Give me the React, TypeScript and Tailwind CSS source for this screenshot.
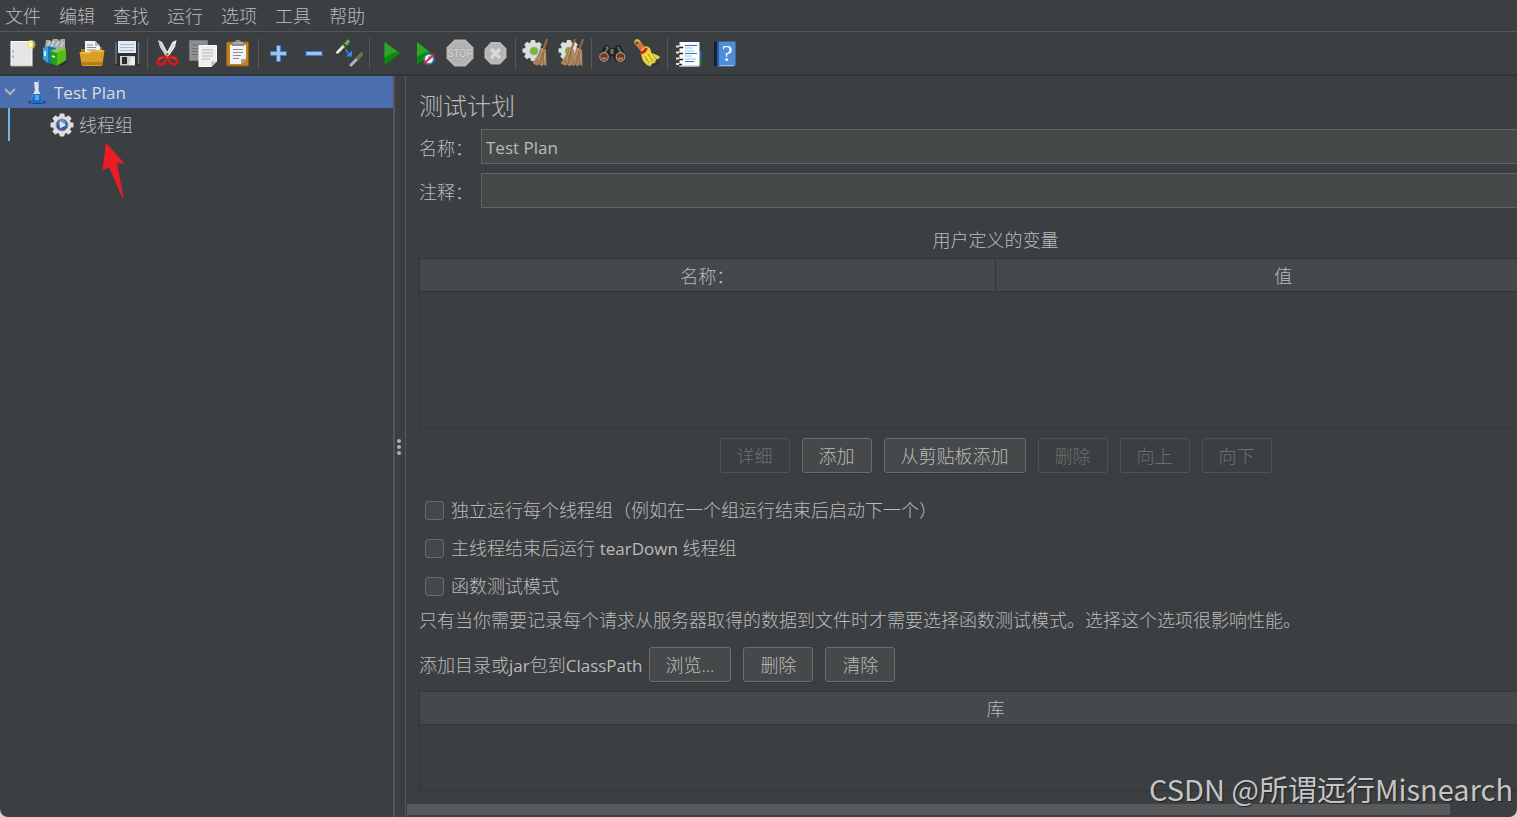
import { useState } from 'react';
import type { ReactNode } from 'react';

const menus = ['文件', '编辑', '查找', '运行', '选项', '工具', '帮助'];

function Icon({ children }: { children: ReactNode }) {
    return (
        <svg width="28" height="28" viewBox="0 0 28 28" fill="none" aria-hidden="true">
            {children}
        </svg>
    );
}

const gearTeeth = [0, 45, 90, 135, 180, 225, 270, 315];

function Gear({ cx, cy, r, fill }: { cx: number; cy: number; r: number; fill: string }) {
    return (
        <g fill={fill}>
            <circle cx={cx} cy={cy} r={r * 0.8} />
            {gearTeeth.map((a) => (
                <rect key={a} x={cx - r * 0.22} y={cy - r} width={r * 0.44} height={r * 0.5} rx="1" transform={`rotate(${a} ${cx} ${cy})`} />
            ))}
        </g>
    );
}

function BroomHead({ x }: { x: number }) {
    return (
        <g transform={`translate(${x} 0)`}>
            <path d="M15 0l2 .6-3.600 10-2-.6z" fill="#9a6a43" />
            <path d="M9 9l6 1.500.5 16.500-3-1.500-2 2-2-2-3 1-4-2.500c3-4 6-8 7.500-14z" fill="#a98560" />
            <path d="M10 12l-4 12M12 12l-3 13M13 13l-1 12" stroke="#86643f" strokeWidth="0.8" />
            <path d="M11 11l-4 10M13.500 14v8" stroke="#cdb08a" strokeWidth="0.7" />
        </g>
    );
}

const icons: Record<string, ReactNode> = {
    新建: (
        <Icon>
            <rect x="3" y="2.500" width="21" height="24" fill="#e6e6e6" stroke="#fff" />
            <path d="M3 27h21.500" stroke="#a5a5a5" />
            <path d="M5 11.500v2M5 16.500v2" stroke="#999" strokeWidth="1.500" />
            <circle cx="23" cy="5.500" r="4.500" fill="#f5e663" opacity="0.65" />
            <circle cx="23" cy="5.500" r="2" fill="#fffbd0" />
        </Icon>
    ),
    模板: (
        <Icon>
            <path d="M2 8l1-7h4l1 2 2-3h5l1 2 2-2h4v11l-9 3z" fill="#a5abae" />
            <path d="M4 8l3-6M8 9l3-7M13 7l3-5M18 8l2-5" stroke="#d5dadc" strokeWidth="1.300" />
            <path d="M0 9l5-2 8 2v17l-8-2-5-4z" fill="#1275b4" />
            <path d="M0 9l5-2v17l-5-4z" fill="#39a0dc" />
            <path d="M7 12l7 2v13l-6-3z" fill="#239f1c" />
            <path d="M14 14l9-4v11l-9 6z" fill="#55bd13" />
            <path d="M7 12l8-3 8 1-9 4z" fill="#7fce4a" />
            <path d="M9 17l3 1M2 12v5" stroke="#fff" strokeWidth="1.500" />
            <path d="M14 27l9-5 2 1-6 4z" fill="#202224" opacity="0.5" />
        </Icon>
    ),
    打开: (
        <Icon>
            <path d="M3 10h5l1-2h15v14H3z" fill="#b27a13" />
            <path d="M7 2h10l5 5v10H7z" fill="#f2f2f2" />
            <path d="M17 2v5h5z" fill="#bdbdbd" />
            <path d="M9 6h6M9 8.500h9M9 11h9" stroke="#8d8d8d" strokeWidth="1" />
            <path d="M1.500 13h10l2-2h13l-2 14.500a2 2 0 0 1-2 1.500h-17a2 2 0 0 1-2-1.500z" fill="#d99e24" />
            <path d="M2.500 14h9.500l2-2h11" stroke="#f6cc69" />
            <path d="M3.500 23h21l-.5 3h-20z" fill="#b77d11" />
        </Icon>
    ),
    保存: (
        <Icon>
            <rect x="2" y="2" width="24.500" height="25" rx="1.500" fill="#2c2f33" />
            <path d="M3 3v22M25.500 3v22" stroke="#70757b" strokeWidth="1.500" />
            <rect x="5" y="2" width="18" height="12" fill="#dfeaf4" />
            <path d="M7 5.500h14M7 8.500h14M7 11.500h14" stroke="#a5bdcf" />
            <rect x="7" y="17" width="15" height="9.500" fill="#c9cbcc" />
            <rect x="9" y="18" width="5" height="7" fill="#2a2c2e" />
            <path d="M18 18h4v8h-6z" fill="#eee" />
        </Icon>
    ),
    剪切: (
        <Icon>
            <path d="M4 1l4 2 8 15-3 1L6 8z" fill="#e4e4e2" />
            <path d="M22.500 1l-4 2-8 15 3 1L21 8z" fill="#f4f4f2" />
            <path d="M5 3l8 14M20 5l-7 13" stroke="#a5a5a3" strokeWidth="0.8" />
            <circle cx="13.300" cy="15" r="1" fill="#555" />
            <path d="M12 18c0 4-1.500 7.500-5 7.500-2.500 0-3.500-1.500-3-3.500.5-2.500 3-4.500 8-4z" stroke="#d11a1d" strokeWidth="2.800" />
            <path d="M15 18c0 4 1.500 7.500 5 7.500 2.500 0 3.500-1.500 3-3.500-.5-2.500-3-4.500-8-4z" stroke="#d11a1d" strokeWidth="2.800" />
            <path d="M5 21c.8-1.500 2-2 3.500-2.400M18 18.500c1.500 0 3 1 3.700 2" stroke="#f37373" strokeWidth="0.8" />
        </Icon>
    ),
    复制: (
        <Icon>
            <rect x="0.500" y="1.500" width="18" height="20" fill="#8d9092" stroke="#777a7c" />
            <path d="M3 6h12M3 9.500h8M3 12.500h7M3 15.500h7" stroke="#6d7072" />
            <path d="M10 6.500h17.500v16l-5 5H10z" fill="#efefef" stroke="#fff" />
            <path d="M22.500 27.500v-5h5z" fill="#b7b7b7" />
            <path d="M13 11h11M13 14h11M13 17h11M13 20h8" stroke="#b5b5b5" />
        </Icon>
    ),
    粘贴: (
        <Icon>
            <rect x="2.500" y="3" width="22" height="24" rx="1" fill="#c18023" stroke="#8b5812" />
            <path d="M6 6h16v14l-5 5H6z" fill="#f3f3f3" />
            <path d="M17 25v-5h5z" fill="#a5a5a5" />
            <path d="M9 10.500h10M9 13.500h10M9 16.500h8M9 19.500h6" stroke="#8d8d8d" />
            <path d="M8 3h3l1-2h4l1 2h3v4H8z" fill="#8b8d8c" />
            <path d="M9 4h10" stroke="#c9cbca" />
        </Icon>
    ),
    展开: (
        <Icon>
            <path d="M11.500 6.500h4v6h6v4h-6v6h-4v-6h-6v-4h6z" fill="#9ec4ee" stroke="#3f7bc8" />
        </Icon>
    ),
    折叠: (
        <Icon>
            <rect x="6" y="12.500" width="16" height="4" fill="#9ec4ee" stroke="#3f7bc8" />
        </Icon>
    ),
    切换: (
        <Icon>
            <path d="M2.500 13.500l7-7.500" stroke="#e3e3df" strokeWidth="3" strokeLinecap="round" />
            <path d="M10 6.500l3-4" stroke="#6aa84a" strokeWidth="3.600" strokeLinecap="round" />
            <path d="M8.500 5l3.500 3" stroke="#2c3a25" strokeWidth="1.300" />
            <path d="M2 15.500l9-5" stroke="#222527" opacity="0.5" />
            <path d="M10.500 10.500l4 5" stroke="#3b86ed" strokeWidth="1.600" />
            <path d="M17 11.500v6h-6z" fill="#3b86ed" />
            <path d="M16 26l7-7" stroke="#b4b6b2" strokeWidth="3" strokeLinecap="round" />
            <path d="M23 19l3.500-4" stroke="#587d4b" strokeWidth="3.600" strokeLinecap="round" />
        </Icon>
    ),
    启动: (
        <Icon>
            <path d="M8.500 3l15.500 11.500L8.500 26z" fill="#078c0a" />
            <path d="M8.500 3l13.500 10c-5 .5-9 2-13.500 6z" fill="#2fa52e" />
        </Icon>
    ),
    不停顿开始: (
        <Icon>
            <path d="M6 3l14 11L6 26z" fill="#078c0a" />
            <path d="M6 3l12 9.500c-4 .5-8 2-12 6z" fill="#2fa52e" />
            <circle cx="18" cy="20" r="4.800" fill="#f5fafe" stroke="#3d7cb9" strokeWidth="1.800" />
            <path d="M18 17v3h2" stroke="#4686bd" />
            <path d="M12.500 25l11-10" stroke="#df2424" strokeWidth="1.700" />
        </Icon>
    ),
    停止: (
        <Icon>
            <path d="M8.500.5h11l8 8v11l-8 8h-11l-8-8v-11z" fill="#b2b2b2" />
            <path d="M9 2h10l7 7v10l-7 7H9l-7-7V9z" stroke="#bebebe" />
            <text x="14" y="18" textAnchor="middle" fontSize="10" fontWeight="400" fontFamily="Roboto, sans-serif" fill="#dadada" stroke="#8f8f8f" strokeWidth="0.500" paintOrder="stroke">STOP</text>
        </Icon>
    ),
    关闭: (
        <Icon>
            <path d="M10 3h9l6.500 6.500v9L19 25.500h-9L3.500 19v-9z" fill="#b5b5b5" />
            <path d="M10.500 4.500h8l5.500 5.500v8l-5.500 6h-8L5 18.500v-8z" stroke="#c0c0c0" />
            <path d="M10 10l9 9M19 10l-9 9" stroke="#d9d9d9" strokeWidth="3.400" />
        </Icon>
    ),
    清除: (
        <Icon>
            <Gear cx={11} cy={11.5} r={10.5} fill="#dcdedc" />
            <circle cx="12" cy="12" r="4" fill="#6fbb36" stroke="#aaa" />
            <BroomHead x={9} />
        </Icon>
    ),
    清除全部: (
        <Icon>
            <Gear cx={12} cy={11.5} r={10.5} fill="#dcdedc" />
            <circle cx="12" cy="12" r="4" fill="#6fbb36" />
            <BroomHead x={2} />
            <BroomHead x={10} />
        </Icon>
    ),
    搜索: (
        <Icon>
            <path d="M6 7l3-1 4 3h3l4-3 3 1 5 10v4l-3 2h-6l-3-3-1-3h-2l-1 3-3 3H4l-3-2v-4z" fill="#232424" />
            <path d="M8 8l2 1-4 6M20 8l3 6" stroke="#7b7e7e" strokeWidth="1.500" />
            <path d="M12.500 10h3v5h-3z" fill="#727474" />
            <circle cx="6" cy="18" r="4.300" fill="#70391c" stroke="#999c9c" strokeWidth="1.200" />
            <circle cx="22.500" cy="18" r="4.300" fill="#70391c" stroke="#999c9c" strokeWidth="1.200" />
            <path d="M3.500 19.500h5M20 19.500h5" stroke="#c27d4e" strokeWidth="2" />
        </Icon>
    ),
    重置搜索: (
        <Icon>
            <path d="M8 25l14 2 5-2-4-3z" fill="#26292a" opacity="0.5" />
            <path d="M4 3l6 7" stroke="#b98139" strokeWidth="6" strokeLinecap="round" />
            <path d="M2.500 2.500l2-1.500 3 2" stroke="#e0b471" strokeWidth="1.500" />
            <circle cx="4" cy="4" r="1.200" fill="#704716" />
            <path d="M8 11l5-4 4 2 1.500 5c3 1 7 2 8.500 4l-1 1.500-3 1-1 3.500-3 .5-1.500 3-3.500-1.500c-4-3-6-7-6-15z" fill="#e8d43c" />
            <path d="M12 17l4 7M15 15l5 8M18 14l5 6" stroke="#af991b" />
            <path d="M13 16l4 5M17 14l4 5" stroke="#fff28b" strokeWidth="0.8" />
            <path d="M7 13.500c3 .5 5-1 6.500-4.500" stroke="#d42121" strokeWidth="3" />
        </Icon>
    ),
    函数助手: (
        <Icon>
            <rect x="24" y="12" width="3.500" height="6" fill="#1f66cb" />
            <rect x="24" y="19" width="3.500" height="7" fill="#13852b" />
            <rect x="5.500" y="3" width="20" height="24.500" fill="#fbfbfb" />
            <path d="M5 27h20" stroke="#b9b9b9" />
            <path d="M2 7.500h4M2 13.500h4M2 19.500h4M2 25h4" stroke="#e4e4e4" strokeWidth="2" />
            <path d="M5 8.500h4M5 14.500h4M5 20.500h4M5 25.500h3" stroke="#1e1e1e" strokeWidth="1.600" />
            <path d="M11 6.500h12M11 14.500h12M11 22.500h9" stroke="#2f6fd0" strokeWidth="1.200" />
            <path d="M11 9h8M11 12h9M11 17h7M11 20h11" stroke="#8fb8e4" strokeWidth="0.900" />
        </Icon>
    ),
    帮助文档: (
        <Icon>
            <path d="M6 2.500h4V27H5V4z" fill="#152233" />
            <path d="M9 2.500h17.500V26L25 27.500H9z" fill="#4d8edb" />
            <path d="M9 3v24" stroke="#2a5c9f" strokeWidth="2" />
            <path d="M10.500 26.500H25" stroke="#9ec3ed" />
            <text x="18" y="22" textAnchor="middle" fontSize="24" fontFamily="Liberation Serif, serif" fill="#fff">?</text>
        </Icon>
    ),
};

const toolbarGroups = [
    ['新建', '模板', '打开', '保存'],
    ['剪切', '复制', '粘贴'],
    ['展开', '折叠', '切换'],
    ['启动', '不停顿开始', '停止', '关闭'],
    ['清除', '清除全部'],
    ['搜索', '重置搜索'],
    ['函数助手', '帮助文档'],
];

function Latin({ children }: { children: ReactNode }) {
    return <span className="text-[17px] font-normal">{children}</span>;
}

function Button({ children, disabled = false }: { children: ReactNode; disabled?: boolean }) {
    return (
        <button
            type="button"
            disabled={disabled}
            className="h-[35px] px-4 rounded-[3px] border border-[#6b6e6f] bg-[#45494a] shadow-[0_1px_0_#35383a] whitespace-nowrap disabled:bg-transparent disabled:border-[#505355] disabled:text-[#6d6f70] disabled:shadow-none"
        >
            {children}
        </button>
    );
}

function DataTable({ columns, className }: { columns: string[]; className: string }) {
    return (
        <div className={`border border-[#323537] ${className}`}>
            <table className="w-full table-fixed border-separate border-spacing-0">
                <thead>
                    <tr>
                        {columns.map((c) => (
                            <th key={c} className="h-[33px] p-0 pt-0.5 bg-[#45494b] border-b border-r last:border-r-0 border-[#323537] font-light text-center">
                                {c}
                            </th>
                        ))}
                    </tr>
                </thead>
                <tbody></tbody>
            </table>
        </div>
    );
}

function Tree() {
    return (
        <aside className="relative w-[395px] shrink-0 border-r-2 border-[#555555]">
            <ul>
                <li className="h-8 flex items-center bg-[#4b6eaf] pl-[3px]">
                    <svg width="14" height="10" viewBox="0 0 14 10" fill="none" aria-hidden="true">
                        <path d="M2 2l5 5 5-5" stroke="#afb1b3" strokeWidth="2.200" />
                    </svg>
                    <svg className="ml-[10px]" width="20" height="26" viewBox="0 0 20 26" aria-hidden="true">
                        <ellipse cx="10" cy="23" rx="9" ry="2" fill="#2a4270" />
                        <path d="M7 3h5l-.5 8 4.500 10c.8 2-.5 3-2 3H6c-1.500 0-2.800-1-2-3l4-10z" fill="#d7e3ee" />
                        <path d="M6.500 15h7l2.500 6c.8 2-.5 3-2 3H6c-1.500 0-2.800-1-2-3z" fill="#176fcb" />
                        <path d="M8 16h4v5H8z" fill="#5aa4ea" />
                        <path d="M11 6l1-5" stroke="#8fa9cc" />
                    </svg>
                    <span className="ml-[7px] pt-0.5 text-[17px] font-normal text-[#dddddd]">Test Plan</span>
                </li>
                <li className="ml-2 h-[33px] flex items-center border-l-2 border-[#6eb4f0] pl-10">
                    <svg width="24" height="24" viewBox="0 0 24 24" aria-hidden="true">
                        <Gear cx={12} cy={12} r={11.5} fill="#dededc" />
                        <circle cx="12" cy="12" r="6" fill="#365b98" stroke="#8f97a8" />
                        <circle cx="12" cy="10.500" r="3.500" fill="#7c9bc9" />
                        <path d="M10 8.500l6 3.500-6 3.500z" fill="#dce8f6" />
                    </svg>
                    <span className="ml-[5px]">线程组</span>
                </li>
            </ul>
            <svg className="absolute left-[101px] top-[66px]" width="26" height="58" viewBox="101 142 26 58" aria-hidden="true">
                <path d="M106 143l19 21-8-1 6.500 35h-1L109 167l-6.500 4z" fill="#ed1c24" />
            </svg>
        </aside>
    );
}

const options = [
    { id: 'serial', label: '独立运行每个线程组（例如在一个组运行结束后启动下一个）' },
    { id: 'teardown', label: <>主线程结束后运行 <Latin>tearDown</Latin> 线程组</> },
    { id: 'functional', label: '函数测试模式' },
];

export default function App() {
    const [name, setName] = useState('Test Plan');
    const [comment, setComment] = useState('');

    return (
        <div className="h-screen bg-[#d5d5d5] overflow-hidden">
            <div className="relative h-full flex flex-col overflow-hidden rounded-b-lg bg-[#3c3f41] text-[#bbbbbb] text-lg leading-[26px] font-light font-['Open_Sans','Noto_Sans_CJK_SC',sans-serif]">
                <nav className="h-8 shrink-0 flex items-center gap-[18px] pl-[5px] border-b border-[#555759]">
                    {menus.map((m) => (
                        <button key={m} type="button">{m}</button>
                    ))}
                </nav>

                <div className="h-11 shrink-0 flex items-center pl-1 border-b-2 border-[#323537]">
                    {toolbarGroups.map((group, i) => (
                        <div key={group[0]} className="flex items-center">
                            {i > 0 && <span className="w-px h-[31px] ml-[3px] mr-0.5 bg-[#555759]" />}
                            {group.map((id) => (
                                <button key={id} type="button" aria-label={id} className="w-[35px] h-[35px] flex items-center justify-center">
                                    {icons[id]}
                                </button>
                            ))}
                        </div>
                    ))}
                </div>

                <div className="flex-1 min-h-0 flex">
                    <Tree />
                    <div className="w-[11px] shrink-0 flex flex-col items-center justify-center gap-0.5 pr-0.5 border-r border-[#555759]">
                        <i className="size-1 rounded-full bg-[#afb1b3]" />
                        <i className="size-1 rounded-full bg-[#afb1b3]" />
                        <i className="size-1 rounded-full bg-[#afb1b3]" />
                    </div>

                    <main className="flex-1 min-w-0 flex flex-col overflow-hidden">
                        <div className="flex-1 w-full min-w-[1179px] px-[13px] pt-[15px]">
                            <h1 className="text-2xl leading-[30px]">测试计划</h1>

                            <div className="mt-2 flex items-center">
                                <label htmlFor="name" className="w-[62px] shrink-0 pt-0.5">名称：</label>
                                <input
                                    id="name"
                                    value={name}
                                    onChange={(e) => setName(e.target.value)}
                                    className="flex-1 h-[35px] px-1 pt-0.5 text-[17px] font-normal bg-[#45494a] border border-[#646464]"
                                />
                            </div>
                            <div className="mt-[9px] flex items-center">
                                <label htmlFor="comment" className="w-[62px] shrink-0 pt-0.5">注释：</label>
                                <input
                                    id="comment"
                                    value={comment}
                                    onChange={(e) => setComment(e.target.value)}
                                    className="flex-1 h-[35px] px-1 pt-0.5 text-[17px] font-normal bg-[#45494a] border border-[#646464]"
                                />
                            </div>

                            <h2 className="mt-[18px] text-center leading-7">用户定义的变量</h2>
                            <DataTable columns={['名称：', '值']} className="mt-1 h-[171px]" />

                            <div className="mt-[9px] flex justify-center gap-3">
                                <Button disabled>详细</Button>
                                <Button>添加</Button>
                                <Button>从剪贴板添加</Button>
                                <Button disabled>删除</Button>
                                <Button disabled>向上</Button>
                                <Button disabled>向下</Button>
                            </div>

                            <div className="mt-[18px]">
                                {options.map((o) => (
                                    <div key={o.id} className="h-[38px] flex items-center gap-[7px] pl-[6px]">
                                        <input
                                            id={o.id}
                                            type="checkbox"
                                            className="appearance-none size-[19px] rounded-[3px] border border-[#6b6b6b] bg-[#43494a] checked:bg-[#4b6eaf]"
                                        />
                                        <label htmlFor={o.id}>{o.label}</label>
                                    </div>
                                ))}
                            </div>

                            <p className="leading-[30px]">只有当你需要记录每个请求从服务器取得的数据到文件时才需要选择函数测试模式。选择这个选项很影响性能。</p>

                            <div className="mt-3 flex items-center gap-1.5">
                                <span className="pt-0.5">添加目录或<Latin>jar</Latin>包到<Latin>ClassPath</Latin></span>
                                <div className="flex gap-3">
                                    <Button>浏览...</Button>
                                    <Button>删除</Button>
                                    <Button>清除</Button>
                                </div>
                            </div>
                            <DataTable columns={['库']} className="mt-[9px] h-[100px]" />
                        </div>
                        <div className="shrink-0 pl-px pb-0.5">
                            <div className="w-[94%] h-[11px] bg-[#595a5b]" />
                        </div>
                    </main>
                </div>

                <p className="absolute right-1 bottom-[9px] text-[29px] leading-10 font-normal text-[#c4c5c5] font-['Noto_Sans_CJK_SC',sans-serif] [text-shadow:1px_1px_1px_#202223]">
                    CSDN @所谓远行Misnearch
                </p>
            </div>
        </div>
    );
}
